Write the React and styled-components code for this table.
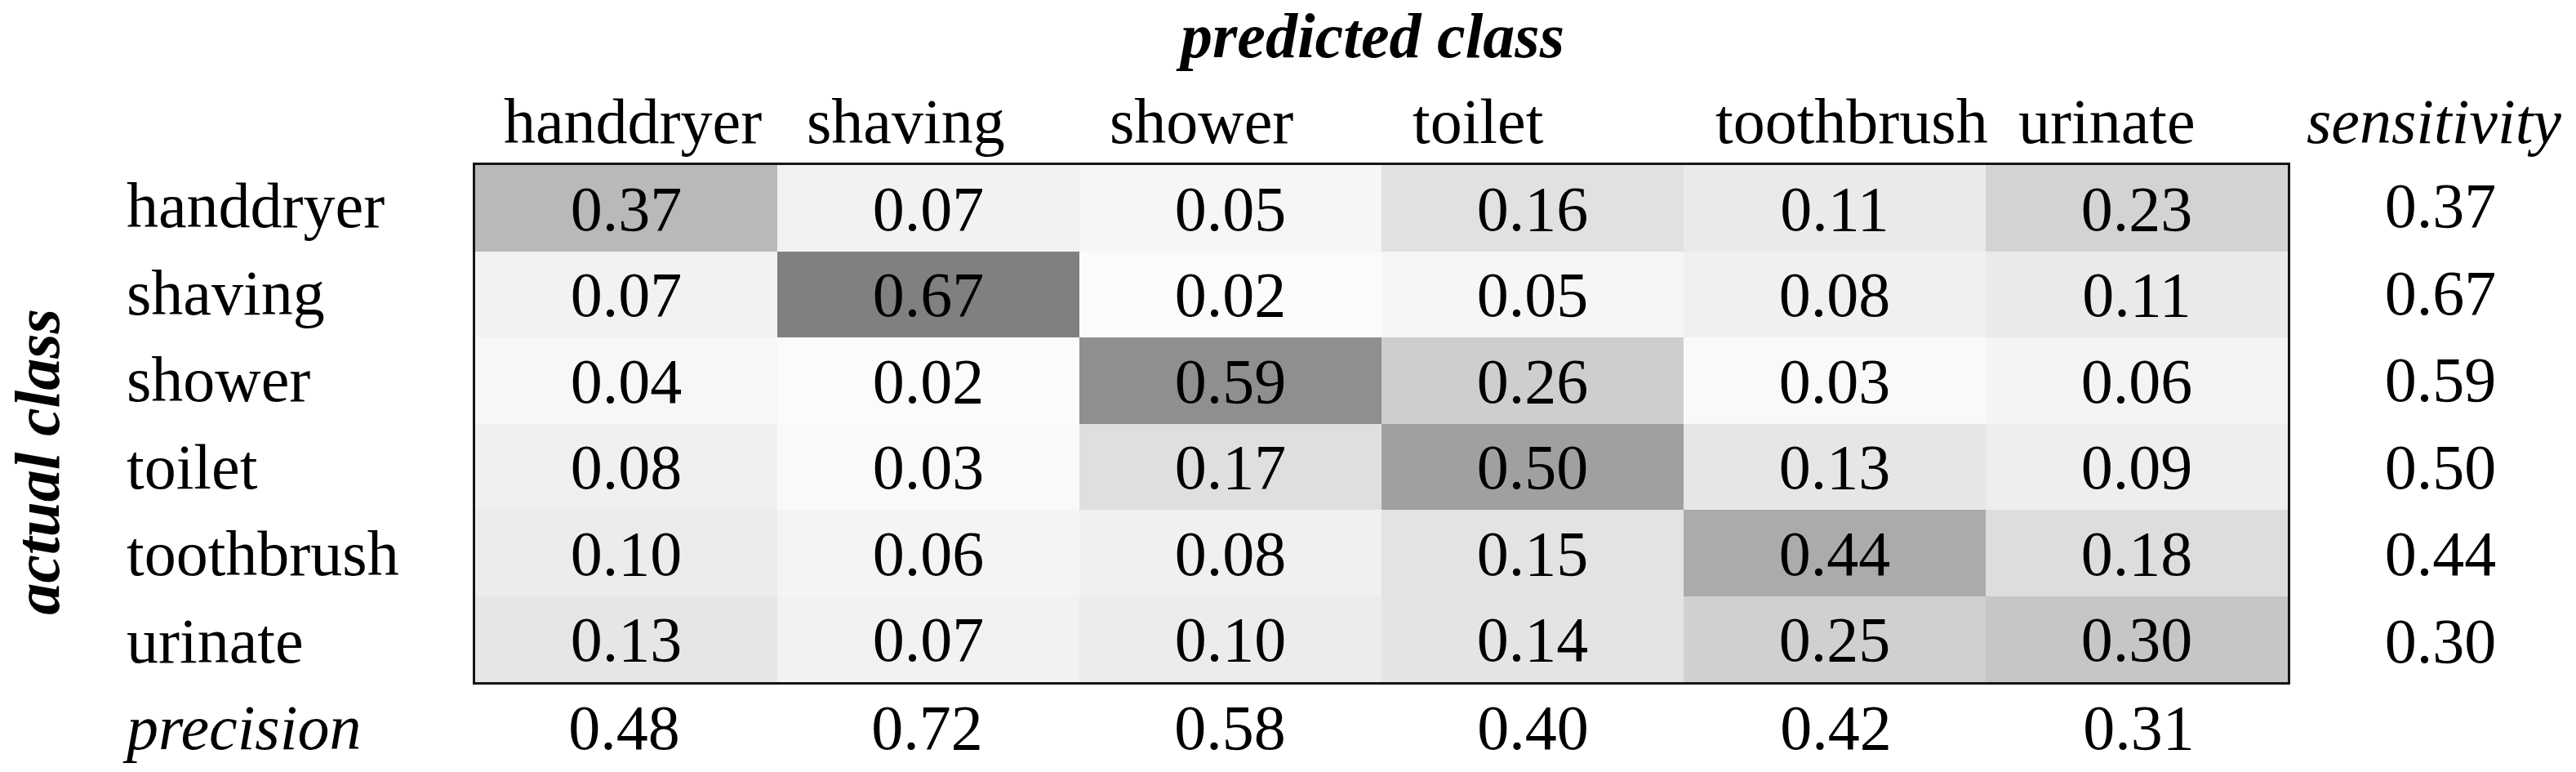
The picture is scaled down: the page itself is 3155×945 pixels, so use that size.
import React from "react";
import styled, { createGlobalStyle } from "styled-components";

const GlobalStyle = createGlobalStyle`
  html, body {
    margin: 0;
    padding: 0;
    background: #ffffff;
  }
`;

const classes = ["handdryer", "shaving", "shower", "toilet", "toothbrush", "urinate"];

const matrix = [
  [0.37, 0.07, 0.05, 0.16, 0.11, 0.23],
  [0.07, 0.67, 0.02, 0.05, 0.08, 0.11],
  [0.04, 0.02, 0.59, 0.26, 0.03, 0.06],
  [0.08, 0.03, 0.17, 0.5, 0.13, 0.09],
  [0.1, 0.06, 0.08, 0.15, 0.44, 0.18],
  [0.13, 0.07, 0.1, 0.14, 0.25, 0.3],
];

const precision = [0.48, 0.72, 0.58, 0.4, 0.42, 0.31];

// grey level goes darker as the share grows
const shade = (v) => {
  const g = Math.round(255 - v * 190);
  return `rgb(${g}, ${g}, ${g})`;
};

const fmt = (v) => v.toFixed(2);

const Page = styled.div`
  width: 3155px;
  height: 945px;
  overflow: hidden;
  background: #ffffff;
  color: #000000;
  font-family: "Liberation Serif", "Times New Roman", serif;
  font-size: 78px;
`;

const Figure = styled.div`
  display: grid;
  grid-template-columns: 100px 479px repeat(6, 371px) 368px;
  grid-template-rows: 93px 106px repeat(6, 106.5px) 106px;
`;

const Title = styled.div`
  grid-column: 3 / 9;
  grid-row: 1;
  text-align: center;
  line-height: 88px;
  font-weight: bold;
  font-style: italic;
  padding-right: 22px;
`;

const AxisLabel = styled.div`
  grid-column: 1;
  grid-row: 3 / 10;
  justify-self: start;
  align-self: center;
  margin-left: 6px;
  margin-bottom: 12px;
  writing-mode: vertical-rl;
  transform: rotate(180deg);
  line-height: 80px;
  font-weight: bold;
  font-style: italic;
  white-space: nowrap;
`;

const ColHead = styled.div`
  grid-row: 2;
  line-height: 112px;
  white-space: nowrap;
  padding-left: ${(p) => (p.$italic ? "20px" : "38px")};
  font-style: ${(p) => (p.$italic ? "italic" : "normal")};
`;

const RowHead = styled.div`
  grid-column: 2;
  padding-left: 55px;
  line-height: 106.5px;
  white-space: nowrap;
  font-style: ${(p) => (p.$italic ? "italic" : "normal")};
`;

const Matrix = styled.div`
  grid-column: 3 / 9;
  grid-row: 3 / 9;
  display: grid;
  grid-template-columns: repeat(6, 1fr);
  grid-template-rows: repeat(6, 1fr);
  border: 3px solid #161616;
  box-sizing: border-box;
`;

const Cell = styled.div`
  background: ${(p) => shade(p.$value)};
  display: flex;
  align-items: center;
  justify-content: center;
  line-height: 1;
  padding-top: 2px;
`;

const Value = styled.div`
  text-align: center;
  line-height: 106.5px;
`;

export default function App() {
  return (
    <Page>
      <GlobalStyle />
      <Figure>
        <Title>predicted class</Title>
        <AxisLabel>actual class</AxisLabel>

        {classes.map((c, i) => (
          <ColHead key={c} style={{ gridColumn: i + 3 }}>
            {c}
          </ColHead>
        ))}
        <ColHead $italic style={{ gridColumn: 9 }}>
          sensitivity
        </ColHead>

        {classes.map((c, i) => (
          <RowHead key={c} style={{ gridRow: i + 3 }}>
            {c}
          </RowHead>
        ))}

        <Matrix>
          {matrix.map((row, r) =>
            row.map((v, c) => (
              <Cell key={`${r}-${c}`} $value={v}>
                {fmt(v)}
              </Cell>
            ))
          )}
        </Matrix>

        {matrix.map((row, r) => (
          <Value key={r} style={{ gridColumn: 9, gridRow: r + 3 }}>
            {fmt(row[r])}
          </Value>
        ))}

        <RowHead $italic style={{ gridRow: 9 }}>
          precision
        </RowHead>
        {precision.map((v, i) => (
          <Value key={i} style={{ gridColumn: i + 3, gridRow: 9 }}>
            {fmt(v)}
          </Value>
        ))}
      </Figure>
    </Page>
  );
}
